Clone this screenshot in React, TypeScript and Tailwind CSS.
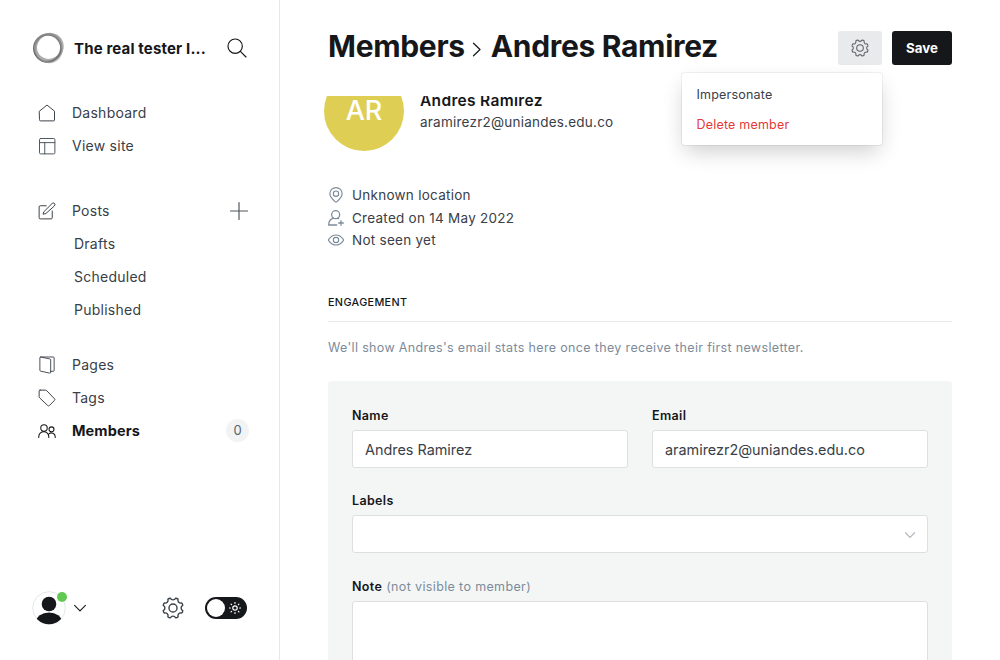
import type { ReactNode } from 'react';

const gearPath = (() => {
  const pt = (deg: number) => {
    const r = (deg * Math.PI) / 180;
    return `${(12 + 11 * Math.cos(r)).toFixed(2)} ${(12 + 11 * Math.sin(r)).toFixed(2)}`;
  };
  let d = '';
  for (let k = 0; k < 8; k++) {
    const a = 22.5 + 45 * k;
    d += `${k === 0 ? 'M' : 'L'}${pt(a - 8)}Q${(12 + 11.6 * Math.cos((a * Math.PI) / 180)).toFixed(2)} ${(12 + 11.6 * Math.sin((a * Math.PI) / 180)).toFixed(2)} ${pt(a + 8)}A3 3 0 0 0 ${pt(a + 37)}`;
  }
  return d + 'Z';
})();

type IconProps = { children: ReactNode; className: string; box?: string; width?: number };

function Icon({ children, className, box = '0 0 24 24', width = 1.5 }: IconProps) {
  return (
    <svg viewBox={box} className={`shrink-0 ${className}`} fill="none" stroke="currentColor" strokeWidth={width} strokeLinecap="round" strokeLinejoin="round">
      {children}
    </svg>
  );
}

function Gear({ className, width }: { className: string; width?: number }) {
  return (
    <Icon className={className} width={width}>
      <path d={gearPath} />
      <circle cx="12" cy="12" r="4.4" />
    </Icon>
  );
}

function NavItem({ icon, label, active, end }: { icon: ReactNode; label: string; active?: boolean; end?: ReactNode }) {
  return (
    <a className={`flex h-[33px] items-center pr-[30px] pl-[38px] ${active ? 'font-bold text-[#15171a]' : 'text-[#394047]'}`}>
      {icon}
      <span className={`ml-4 flex-1 ${active ? 'text-[14.5px] tracking-[0.1px]' : 'text-[14px] tracking-[0.25px]'}`}>{label}</span>
      {end}
    </a>
  );
}

function SubItem({ label }: { label: string }) {
  return <a className="flex h-[33px] items-center pl-[74px] text-[14px] tracking-[0.25px] text-[#394047]">{label}</a>;
}

function Logo() {
  return (
    <svg viewBox="0 0 32 32" className="size-8 shrink-0" fill="none">
      <ellipse cx="15.5" cy="16.2" rx="13.6" ry="13.6" stroke="#4a4a4a" strokeOpacity=".85" strokeWidth="1.7" />
      <ellipse cx="17.2" cy="15" rx="13.6" ry="12.8" stroke="#777" strokeOpacity=".6" strokeWidth="2.4" transform="rotate(-35 17.2 15)" />
      <ellipse cx="15.8" cy="16" rx="12.8" ry="14" stroke="#777" strokeOpacity=".6" strokeWidth="1.6" transform="rotate(30 16 16)" />
      <ellipse cx="16.4" cy="15.8" rx="14.4" ry="13.4" stroke="#999" strokeOpacity=".6" strokeWidth="1.6" transform="rotate(60 16 16)" />
    </svg>
  );
}

function Sidebar() {
  return (
    <aside className="flex w-[280px] shrink-0 flex-col border-r border-[#e5e7e9]">
      <header className="flex items-center pt-8 pr-8 pl-8">
        <Logo />
        <h2 className="ml-2.5 flex-1 pt-0.5 text-[15px] font-bold tracking-[0.15px] whitespace-nowrap text-[#15171a]">The real tester I...</h2>
        <Icon className="size-5 text-[#15171a]" width={1.4}>
          <circle cx="9.8" cy="9.8" r="8.6" />
          <path d="m16 16 6.8 6.8" />
        </Icon>
      </header>

      <nav className="mt-8 flex flex-col">
        <NavItem
          label="Dashboard"
          icon={
            <Icon className="size-[18px] text-[#394047]" width={1.3}>
              <path d="M2 9.5 12 1.4 22 9.500V21.300a1.200 1.200 0 0 1-1.200 1.200H3.200a1.200 1.200 0 0 1-1.200-1.200Z" />
            </Icon>
          }
        />
        <NavItem
          label="View site"
          icon={
            <Icon className="size-[18px] text-[#4d545b]" width={1.3}>
              <rect x="2" y="2" width="20.5" height="20.5" rx="1.5" />
              <path d="M2 7.5h20.500M9 7.500v15" />
            </Icon>
          }
        />
      </nav>

      <nav className="mt-8 flex flex-col">
        <NavItem
          label="Posts"
          icon={
            <Icon className="size-[18px] text-[#394047]" width={1.3}>
              <path d="M11 5H3a1.500 1.500 0 0 0-1.500 1.500V21A1.500 1.500 0 0 0 3 22.500h14.500A1.500 1.500 0 0 0 19 21v-9" />
              <path d="m10 15.500-3.200.8.900-3.200L18.800 2a2.200 2.200 0 0 1 3.200 3.100Z" />
            </Icon>
          }
          end={
            <Icon className="size-5 text-[#50565d]" box="0 0 20 20" width={1.2}>
              <path d="M10 1.5v17M1.500 10h17" />
            </Icon>
          }
        />
        <SubItem label="Drafts" />
        <SubItem label="Scheduled" />
        <SubItem label="Published" />
      </nav>

      <nav className="mt-[22px] flex flex-col">
        <NavItem
          label="Pages"
          icon={
            <Icon className="size-[18px] text-[#394047]" width={1.2}>
              <path d="M3.300 1.300 15.800 3.900a1.400 1.400 0 0 1 1.100 1.400v16.300a1.200 1.200 0 0 1-1.500 1.200L3.500 20.200a1.300 1.300 0 0 1-1-1.300V2.300a1 1 0 0 1 1-1h16.800a1.200 1.200 0 0 1 1.200 1.200v16.700a1.200 1.200 0 0 1-1.200 1.200H17" />
            </Icon>
          }
        />
        <NavItem
          label="Tags"
          icon={
            <Icon className="size-[18px] text-[#394047]" width={1.3}>
              <path d="M2.800 1.500h6.800a3 3 0 0 1 2.200.9l10.200 10.700a1.500 1.500 0 0 1 0 2.100l-6.900 6.900a1.500 1.500 0 0 1-2.100 0L2.400 12A3 3 0 0 1 1.500 9.800V2.800a1.300 1.300 0 0 1 1.300-1.300Z" />
            </Icon>
          }
        />
        <NavItem
          active
          label="Members"
          icon={
            <Icon className="size-[18px] text-[#15171a]" width={1.4}>
              <circle cx="8" cy="8" r="4.3" />
              <circle cx="18" cy="9.8" r="3.3" />
              <path d="M1 20.500v-1a6.700 6.700 0 0 1 13.400 0v1M14.500 16a5 5 0 0 1 8.500 3.600v.9" />
            </Icon>
          }
          end={
            <span className="flex size-[23px] items-center justify-center rounded-full bg-[#f1f3f5] text-[13px] font-normal text-[#54666d]">0</span>
          }
        />
      </nav>

      <footer className="mt-auto flex items-center pr-8 pb-[35px] pl-8">
        <div className="relative">
          <svg viewBox="0 0 34 34" className="size-[34px]">
            <defs>
              <clipPath id="avatar">
                <circle cx="17" cy="17" r="16.3" />
              </clipPath>
            </defs>
            <circle cx="17" cy="17" r="16.3" fill="#fff" stroke="#e3e6e8" />
            <g clipPath="url(#avatar)" fill="#15171a">
              <circle cx="17" cy="13" r="7.3" />
              <ellipse cx="17" cy="31.3" rx="13" ry="9.8" />
            </g>
          </svg>
          <span className="absolute top-px right-[-1px] size-2.5 rounded-full bg-[#61c951]" />
        </div>
        <Icon className="ml-2 size-3 text-[#15171a]" box="0 0 12 12" width={1.1}>
          <path d="m.6 3.300 5.400 5.600 5.400-5.600" />
        </Icon>
        <Gear className="ml-[76px] size-[22px] text-[#394047]" width={1.5} />
        <div className="ml-auto flex h-[22px] w-[42px] items-center justify-between rounded-full bg-[#15171a] pr-1.5 pl-0.5">
          <span className="size-[18px] rounded-full bg-white" />
          <Icon className="size-3 text-white" box="0 0 12 12" width={1.2}>
            <circle cx="6" cy="6" r="2.2" />
            <path d="M6 .5v.8M6 10.7v.8M.5 6h.8M10.7 6h.8M2.1 2.1l.5.5M9.4 9.4l.5.5M2.1 9.9l.5-.5M9.4 2.6l.5-.5" />
          </Icon>
        </div>
      </footer>
    </aside>
  );
}

function Detail({ icon, text }: { icon: ReactNode; text: string }) {
  return (
    <p className="flex h-[22.5px] items-center gap-2 text-[13.5px] tracking-[0.26px] text-[#394047]">
      {icon}
      {text}
    </p>
  );
}

function Field({ label, hint, children }: { label: string; hint?: string; children: ReactNode }) {
  return (
    <label className="flex flex-1 flex-col">
      <span className="mb-1 h-5 text-[12.5px] leading-5 font-semibold tracking-[0.35px] text-[#15171a]">
        {label}
        {hint && <span className="ml-1 font-normal tracking-[0.36px] text-[#7c8b9a]">{hint}</span>}
      </span>
      {children}
    </label>
  );
}

const box = 'flex h-[38px] items-center rounded-[3px] border border-[#dddfe0] bg-white px-3 pt-0.5 text-[14.4px] text-[#394047]';

export default function App() {
  return (
    <div className="flex h-[660px] w-[1000px] overflow-hidden bg-white font-['Inter',sans-serif] text-[#15171a]">
      <Sidebar />
      <main className="flex flex-1 flex-col px-12">
        <header className="relative flex h-24 shrink-0 items-center justify-between">
          <h1 className="flex items-center pb-1 text-[30px] leading-none font-bold tracking-[-0.32px]">
            <span>Members</span>
            <Icon className="mr-[9px] ml-[7px] mt-[6px] h-[15px] w-2.5" box="0 0 10 15" width={1.2}>
              <path d="m1.500 1.200 6.500 6.300-6.500 6.300" />
            </Icon>
            <span>Andres Ramirez</span>
          </h1>
          <div className="flex gap-2.5">
            <button className="flex h-[34px] w-11 items-center justify-center rounded-[3px] bg-[#e9eaeb]">
              <Gear className="size-[18px] text-[#5b6167]" width={1.4} />
            </button>
            <button className="h-[34px] w-[60px] rounded-[3px] bg-[#15171a] pt-0.5 text-[13.3px] font-bold text-white">Save</button>
          </div>
          <div className="absolute top-[73px] right-[70px] z-10 flex h-[72px] w-[200px] flex-col rounded-[3px] bg-white px-[14.5px] pt-[7px] text-[12.5px] tracking-[0.2px] shadow-[0_0_0_1px_rgba(0,0,0,0.05),0_9px_22px_-3px_rgba(0,0,0,0.2)]">
            <a className="h-[30px] leading-[30px] text-[#394047]">Impersonate</a>
            <a className="h-[30px] leading-[30px] text-[#e53935]">Delete member</a>
          </div>
        </header>

        <div className="-ml-1 flex h-[55px] shrink-0 items-end gap-4 overflow-hidden">
          <div className="flex size-20 shrink-0 items-center justify-center rounded-full bg-[#decf54] pt-px text-[27px] font-medium text-white">AR</div>
          <div className="h-20">
            <h3 className="mt-[19px] text-[15.5px] leading-[22px] font-semibold tracking-[0.32px]">Andres Ramirez</h3>
            <p className="text-[13.5px] leading-[20px] tracking-[0.23px] text-[#394047]">aramirezr2@uniandes.edu.co</p>
          </div>
        </div>

        <div className="mt-[33px] flex flex-col">
          <Detail
            text="Unknown location"
            icon={
              <Icon className="size-4 text-[#7c8b9a]" width={1.7}>
                <path d="M12 1a9.200 9.200 0 0 1 9.200 9.200c0 5.300-5.600 9.700-8.200 12.100a1.500 1.500 0 0 1-2 0c-2.600-2.400-8.200-6.800-8.200-12.100A9.200 9.200 0 0 1 12 1Z" />
                <circle cx="12" cy="10" r="4" />
              </Icon>
            }
          />
          <Detail
            text="Created on 14 May 2022"
            icon={
              <Icon className="size-4 text-[#7c8b9a]" width={1.9}>
                <circle cx="11.5" cy="7" r="6" />
                <path d="M8.500 12.300C4 13.500 1 17 1 22.500h12M14.500 12.400l1.500.5M19.500 16v7M16 19.500h7" />
              </Icon>
            }
          />
          <Detail
            text="Not seen yet"
            icon={
              <Icon className="size-4 text-[#7c8b9a]" width={1.7}>
                <path d="M12 4.500c5 0 8.700 3.500 10.700 6.300a2 2 0 0 1 0 2.400C20.700 16 17 19.500 12 19.500S3.300 16 1.300 13.200a2 2 0 0 1 0-2.400C3.300 8 7 4.500 12 4.500Z" />
                <circle cx="12" cy="12" r="4" />
              </Icon>
            }
          />
        </div>

        <h4 className="mt-[43px] h-[27px] shrink-0 border-b border-[#e8eaeb] text-[10.8px] leading-4 font-medium tracking-[0.35px]">ENGAGEMENT</h4>
        <p className="mt-4 text-[12.5px] leading-5 tracking-[0.34px] text-[#7c8b9a]">
          We'll show Andres's email stats here once they receive their first newsletter.
        </p>

        <section className="mt-[23px] flex flex-1 flex-col rounded-t-[3px] bg-[#f4f6f6] px-6 pt-[25px]">
          <div className="flex gap-6">
            <Field label="Name">
              <span className={box}>Andres Ramirez</span>
            </Field>
            <Field label="Email">
              <span className={box}>aramirezr2@uniandes.edu.co</span>
            </Field>
          </div>
          <div className="mt-[23px] flex">
            <Field label="Labels">
              <span className={`${box} justify-end`}>
                <Icon className="size-2.5 text-[#abb4be]" box="0 0 10 10" width={1.1}>
                  <path d="m.3 2.700 4.700 4.700 4.700-4.700" />
                </Icon>
              </span>
            </Field>
          </div>
          <div className="mt-6 flex">
            <Field label="Note" hint="(not visible to member)">
              <span className="h-24 rounded-[3px] border border-[#dddfe0] bg-white" />
            </Field>
          </div>
        </section>
      </main>
    </div>
  );
}
